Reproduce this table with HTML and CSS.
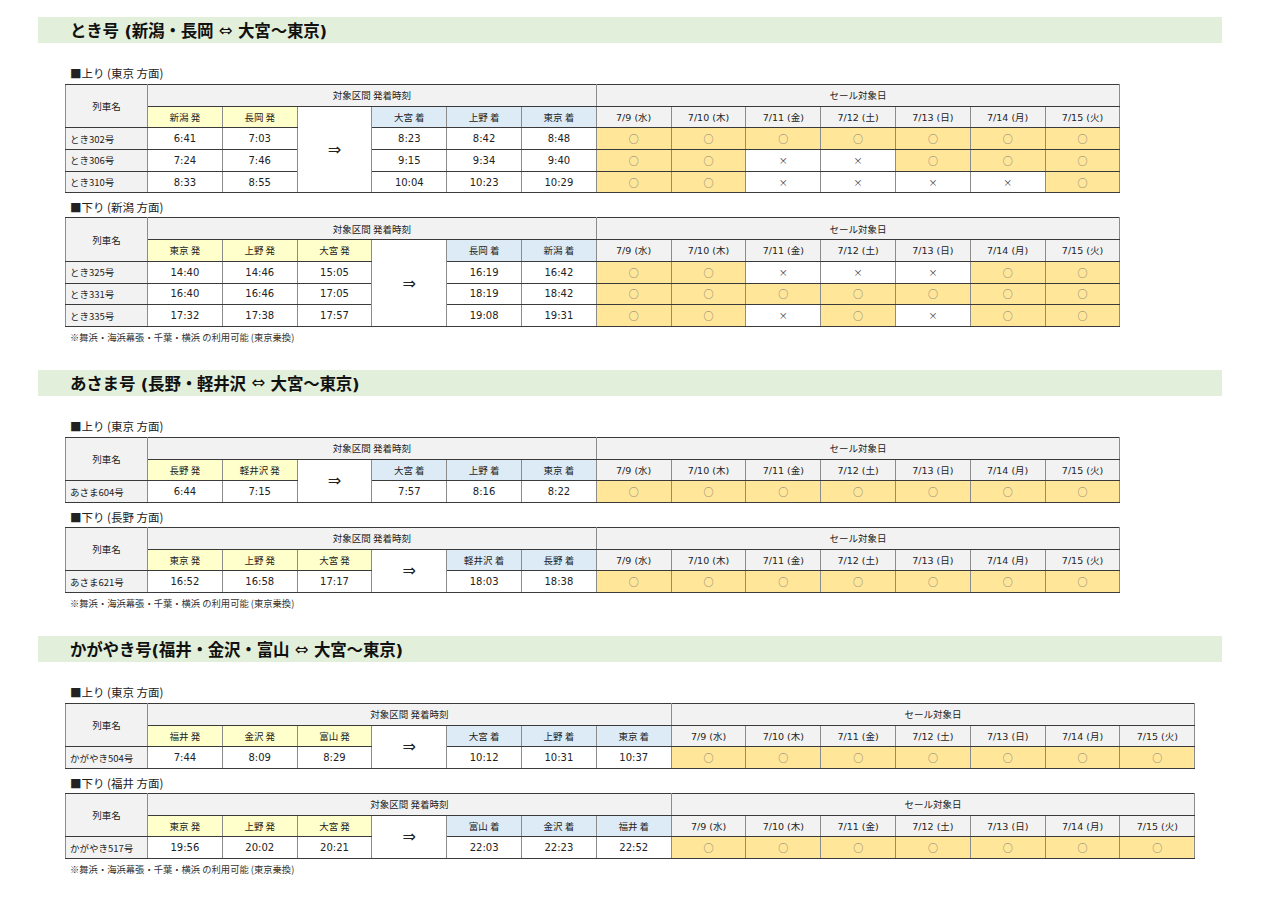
FILE: index.html
```html
<!DOCTYPE html>
<html lang="ja">
<head>
<meta charset="utf-8">
<title>セール対象列車</title>
<link rel="stylesheet" href="styles.css">
</head>
<body>
<div class="page">

<section class="sec">
  <h2 class="band">とき号 (新潟・長岡 <span class="swap">⇔</span> 大宮〜東京)</h2>
  <p class="dir first">■上り (東京 方面)</p>
  <table class="tt">
    <colgroup><col class="c-name"><col span="13" class="c"></colgroup>
    <tr><th rowspan="2" class="hd">列車名</th><th colspan="6" class="hd">対象区間 発着時刻</th><th colspan="7" class="hd">セール対象日</th></tr>
    <tr><th class="dep">新潟 発</th><th class="dep">長岡 発</th><td rowspan="4" class="arrow">⇒</td><th class="arr">大宮 着</th><th class="arr">上野 着</th><th class="arr">東京 着</th><th class="date">7/9 (水)</th><th class="date">7/10 (木)</th><th class="date">7/11 (金)</th><th class="date">7/12 (土)</th><th class="date">7/13 (日)</th><th class="date">7/14 (月)</th><th class="date">7/15 (火)</th></tr>
    <tr><td class="name">とき302号</td><td>6:41</td><td>7:03</td><td>8:23</td><td>8:42</td><td>8:48</td><td class="ok">○</td><td class="ok">○</td><td class="ok">○</td><td class="ok">○</td><td class="ok">○</td><td class="ok">○</td><td class="ok">○</td></tr>
    <tr><td class="name">とき306号</td><td>7:24</td><td>7:46</td><td>9:15</td><td>9:34</td><td>9:40</td><td class="ok">○</td><td class="ok">○</td><td class="ng">×</td><td class="ng">×</td><td class="ok">○</td><td class="ok">○</td><td class="ok">○</td></tr>
    <tr><td class="name">とき310号</td><td>8:33</td><td>8:55</td><td>10:04</td><td>10:23</td><td>10:29</td><td class="ok">○</td><td class="ok">○</td><td class="ng">×</td><td class="ng">×</td><td class="ng">×</td><td class="ng">×</td><td class="ok">○</td></tr>
  </table>
  <p class="dir">■下り (新潟 方面)</p>
  <table class="tt">
    <colgroup><col class="c-name"><col span="13" class="c"></colgroup>
    <tr><th rowspan="2" class="hd">列車名</th><th colspan="6" class="hd">対象区間 発着時刻</th><th colspan="7" class="hd">セール対象日</th></tr>
    <tr><th class="dep">東京 発</th><th class="dep">上野 発</th><th class="dep">大宮 発</th><td rowspan="4" class="arrow">⇒</td><th class="arr">長岡 着</th><th class="arr">新潟 着</th><th class="date">7/9 (水)</th><th class="date">7/10 (木)</th><th class="date">7/11 (金)</th><th class="date">7/12 (土)</th><th class="date">7/13 (日)</th><th class="date">7/14 (月)</th><th class="date">7/15 (火)</th></tr>
    <tr><td class="name">とき325号</td><td>14:40</td><td>14:46</td><td>15:05</td><td>16:19</td><td>16:42</td><td class="ok">○</td><td class="ok">○</td><td class="ng">×</td><td class="ng">×</td><td class="ng">×</td><td class="ok">○</td><td class="ok">○</td></tr>
    <tr><td class="name">とき331号</td><td>16:40</td><td>16:46</td><td>17:05</td><td>18:19</td><td>18:42</td><td class="ok">○</td><td class="ok">○</td><td class="ok">○</td><td class="ok">○</td><td class="ok">○</td><td class="ok">○</td><td class="ok">○</td></tr>
    <tr><td class="name">とき335号</td><td>17:32</td><td>17:38</td><td>17:57</td><td>19:08</td><td>19:31</td><td class="ok">○</td><td class="ok">○</td><td class="ng">×</td><td class="ok">○</td><td class="ng">×</td><td class="ok">○</td><td class="ok">○</td></tr>
  </table>
  <p class="note">※舞浜・海浜幕張・千葉・横浜 の利用可能 (東京乗換)</p>
</section>

<section class="sec">
  <h2 class="band">あさま号 (長野・軽井沢 <span class="swap">⇔</span> 大宮〜東京)</h2>
  <p class="dir first">■上り (東京 方面)</p>
  <table class="tt">
    <colgroup><col class="c-name"><col span="13" class="c"></colgroup>
    <tr><th rowspan="2" class="hd">列車名</th><th colspan="6" class="hd">対象区間 発着時刻</th><th colspan="7" class="hd">セール対象日</th></tr>
    <tr><th class="dep">長野 発</th><th class="dep">軽井沢 発</th><td rowspan="2" class="arrow">⇒</td><th class="arr">大宮 着</th><th class="arr">上野 着</th><th class="arr">東京 着</th><th class="date">7/9 (水)</th><th class="date">7/10 (木)</th><th class="date">7/11 (金)</th><th class="date">7/12 (土)</th><th class="date">7/13 (日)</th><th class="date">7/14 (月)</th><th class="date">7/15 (火)</th></tr>
    <tr><td class="name">あさま604号</td><td>6:44</td><td>7:15</td><td>7:57</td><td>8:16</td><td>8:22</td><td class="ok">○</td><td class="ok">○</td><td class="ok">○</td><td class="ok">○</td><td class="ok">○</td><td class="ok">○</td><td class="ok">○</td></tr>
  </table>
  <p class="dir">■下り (長野 方面)</p>
  <table class="tt">
    <colgroup><col class="c-name"><col span="13" class="c"></colgroup>
    <tr><th rowspan="2" class="hd">列車名</th><th colspan="6" class="hd">対象区間 発着時刻</th><th colspan="7" class="hd">セール対象日</th></tr>
    <tr><th class="dep">東京 発</th><th class="dep">上野 発</th><th class="dep">大宮 発</th><td rowspan="2" class="arrow">⇒</td><th class="arr">軽井沢 着</th><th class="arr">長野 着</th><th class="date">7/9 (水)</th><th class="date">7/10 (木)</th><th class="date">7/11 (金)</th><th class="date">7/12 (土)</th><th class="date">7/13 (日)</th><th class="date">7/14 (月)</th><th class="date">7/15 (火)</th></tr>
    <tr><td class="name">あさま621号</td><td>16:52</td><td>16:58</td><td>17:17</td><td>18:03</td><td>18:38</td><td class="ok">○</td><td class="ok">○</td><td class="ok">○</td><td class="ok">○</td><td class="ok">○</td><td class="ok">○</td><td class="ok">○</td></tr>
  </table>
  <p class="note">※舞浜・海浜幕張・千葉・横浜 の利用可能 (東京乗換)</p>
</section>

<section class="sec">
  <h2 class="band">かがやき号(福井・金沢・富山 <span class="swap">⇔</span> 大宮〜東京)</h2>
  <p class="dir first">■上り (東京 方面)</p>
  <table class="tt wide">
    <colgroup><col class="c-name"><col span="14" class="c"></colgroup>
    <tr><th rowspan="2" class="hd">列車名</th><th colspan="7" class="hd">対象区間 発着時刻</th><th colspan="7" class="hd">セール対象日</th></tr>
    <tr><th class="dep">福井 発</th><th class="dep">金沢 発</th><th class="dep">富山 発</th><td rowspan="2" class="arrow">⇒</td><th class="arr">大宮 着</th><th class="arr">上野 着</th><th class="arr">東京 着</th><th class="date">7/9 (水)</th><th class="date">7/10 (木)</th><th class="date">7/11 (金)</th><th class="date">7/12 (土)</th><th class="date">7/13 (日)</th><th class="date">7/14 (月)</th><th class="date">7/15 (火)</th></tr>
    <tr><td class="name">かがやき504号</td><td>7:44</td><td>8:09</td><td>8:29</td><td>10:12</td><td>10:31</td><td>10:37</td><td class="ok">○</td><td class="ok">○</td><td class="ok">○</td><td class="ok">○</td><td class="ok">○</td><td class="ok">○</td><td class="ok">○</td></tr>
  </table>
  <p class="dir">■下り (福井 方面)</p>
  <table class="tt wide">
    <colgroup><col class="c-name"><col span="14" class="c"></colgroup>
    <tr><th rowspan="2" class="hd">列車名</th><th colspan="7" class="hd">対象区間 発着時刻</th><th colspan="7" class="hd">セール対象日</th></tr>
    <tr><th class="dep">東京 発</th><th class="dep">上野 発</th><th class="dep">大宮 発</th><td rowspan="2" class="arrow">⇒</td><th class="arr">富山 着</th><th class="arr">金沢 着</th><th class="arr">福井 着</th><th class="date">7/9 (水)</th><th class="date">7/10 (木)</th><th class="date">7/11 (金)</th><th class="date">7/12 (土)</th><th class="date">7/13 (日)</th><th class="date">7/14 (月)</th><th class="date">7/15 (火)</th></tr>
    <tr><td class="name">かがやき517号</td><td>19:56</td><td>20:02</td><td>20:21</td><td>22:03</td><td>22:23</td><td>22:52</td><td class="ok">○</td><td class="ok">○</td><td class="ok">○</td><td class="ok">○</td><td class="ok">○</td><td class="ok">○</td><td class="ok">○</td></tr>
  </table>
  <p class="note">※舞浜・海浜幕張・千葉・横浜 の利用可能 (東京乗換)</p>
</section>

</div>
</body>
</html>
```

FILE: styles.css
```css
html, body {
  margin: 0;
  padding: 0;
  background: #ffffff;
}

body {
  font-family: "DejaVu Sans", "Noto Sans CJK JP", sans-serif;
  color: #222222;
}

.page {
  width: 1184px;
  padding: 17px 0 0 38px;
}

.sec {
  margin: 0 0 26px 0;
}

.band {
  margin: 0;
  height: 26px;
  display: flex;
  align-items: center;
  padding-left: 32px;
  background: #e2efda;
  font-family: "DejaVu Sans", "Noto Sans CJK JP", sans-serif;
  font-size: 16.5px;
  font-weight: bold;
  color: #111111;
  letter-spacing: -0.2px;
  white-space: pre;
}

.band .swap {
  font-weight: normal;
}

.dir {
  margin: 5px 0 1px 32px;
  height: 18px;
  line-height: 18px;
  font-family: "Noto Sans CJK JP", sans-serif;
  font-size: 11.5px;
  color: #222222;
}

.dir.first {
  margin-top: 21px;
  margin-bottom: 2px;
}

.note {
  margin: 3px 0 0 32px;
  height: 14px;
  line-height: 14px;
  font-family: "Noto Sans CJK JP", sans-serif;
  font-size: 9.3px;
  color: #333333;
}

.tt {
  margin-left: 27px;
  border-collapse: collapse;
  table-layout: fixed;
  width: 1054.4px;
  border: 1px solid #7f7f7f;
}

.tt.wide {
  width: 1129.2px;
}

.c-name {
  width: 82px;
}

.c {
  width: 74.8px;
}

.tt tr {
  height: 21.7px;
}

.tt th,
.tt td {
  padding: 0;
  text-align: center;
  vertical-align: middle;
  border-top: 1px solid #3a3a3a;
  border-bottom: 1px solid #3a3a3a;
  border-left: 1px solid #8c8c8c;
  border-right: 1px solid #8c8c8c;
  font-size: 10px;
  font-weight: normal;
  white-space: nowrap;
  overflow: hidden;
}

.tt th {
  font-family: "Noto Sans CJK JP", sans-serif;
  font-size: 9.5px;
}

.tt .hd {
  background: #f2f2f2;
}

.tt .dep {
  background: #ffffcc;
}

.tt .arr {
  background: #ddebf7;
}

.tt .date {
  background: #f2f2f2;
  font-family: "DejaVu Sans", "Noto Sans CJK JP", sans-serif;
  font-size: 9.5px;
}

.tt .arrow {
  background: #ffffff;
  font-size: 16px;
  font-family: "DejaVu Sans", sans-serif;
}

.tt .name {
  background: #f2f2f2;
  text-align: left;
  padding-left: 4px;
  font-family: "Noto Sans CJK JP", sans-serif;
  font-size: 9.5px;
}

.tt .ok {
  background: #ffe699;
  color: #777777;
  font-family: "Noto Sans CJK JP", sans-serif;
  font-size: 10px;
}

.tt .ng {
  background: #ffffff;
  color: #333333;
  font-family: "Noto Sans CJK JP", sans-serif;
  font-size: 9px;
}
```
